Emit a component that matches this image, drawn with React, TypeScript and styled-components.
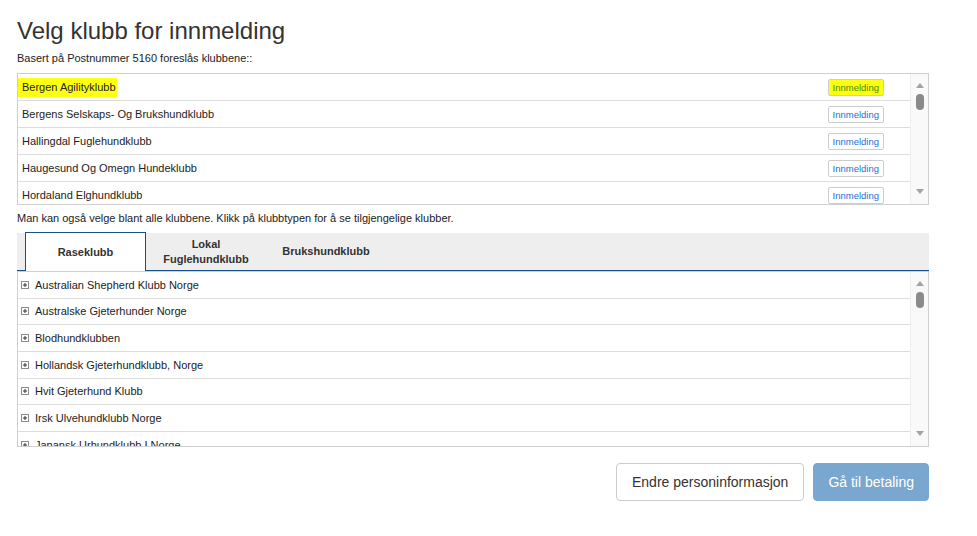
import React from 'react';
import styled, {createGlobalStyle} from 'styled-components';

const GlobalStyle = createGlobalStyle`
    body {
        margin: 0;
        background: #fff;
        font-family: Arial, "Liberation Sans", Helvetica, sans-serif;
        color: #333;
    }
`;

const Page = styled.div`
    width: 912px;
    margin-left: 17px;
    padding-bottom: 35px;
`;

const Heading = styled.h1`
    margin: 16px 0 0;
    font-size: 24px;
    font-weight: normal;
    line-height: 30px;
    color: #333;
`;

const Lead = styled.p<{$top: number; $bottom: number}>`
    margin: ${p => p.$top}px 0 ${p => p.$bottom}px;
    font-size: 11px;
    line-height: 16px;
    color: #222;
`;

const Box = styled.div<{$height: number}>`
    display: flex;
    height: ${p => p.$height}px;
    border: 1px solid #cfcfcf;
    overflow: hidden;
`;

const List = styled.div`
    flex: 1;
    overflow: hidden;
`;

const Row = styled.div<{$h: number}>`
    display: flex;
    align-items: center;
    justify-content: space-between;
    height: ${p => p.$h}px;
    box-sizing: border-box;
    border-bottom: 1px solid #ddd;
    padding: 0 26px 0 0;
    font-size: 11px;
    color: #222;
`;

const ClubRow = styled(Row)`
    padding-left: 3px;
    justify-content: flex-start;
    gap: 6px;
`;

const Name = styled.span<{$marked?: boolean}>`
    padding: 3px 1px 4px 4px;
    background: ${p => (p.$marked ? '#ffff10' : 'transparent')};
`;

const SignUp = styled.button<{$marked?: boolean}>`
    height: 17px;
    padding: 0 4px;
    border: 1px solid #ccc;
    border-radius: 2px;
    background: ${p => (p.$marked ? '#ffff10' : '#fff')};
    color: ${p => (p.$marked ? '#3f8a14' : '#1d6fdc')};
    font-family: Arial, "Liberation Sans", sans-serif;
    font-size: 9.5px;
    line-height: 15px;
    cursor: pointer;
`;

const Scrollbar = styled.div`
    width: 17px;
    flex: none;
    display: flex;
    flex-direction: column;
    align-items: center;
    background: #f9f9f9;
    border-left: 1px solid #f0f0f0;
`;

const Arrow = styled.div<{$down?: boolean}>`
    width: 0;
    height: 0;
    margin: ${p => (p.$down ? 'auto 0 10px' : '9px 0 0')};
    border-left: 4px solid transparent;
    border-right: 4px solid transparent;
    ${p => (p.$down ? 'border-top: 5px solid #a3a3a3;' : 'border-bottom: 5px solid #a3a3a3;')}
`;

const Thumb = styled.div`
    width: 8px;
    height: 16px;
    margin-top: 6px;
    border-radius: 4px;
    background: #8a8a8a;
`;

const TabBar = styled.div`
    display: flex;
    height: 37px;
    padding-left: 8px;
    margin-top: 7px;
    background: #eee;
    border-bottom: 1px solid #154f8c;
`;

const Tab = styled.div<{$active?: boolean}>`
    width: 120px;
    box-sizing: border-box;
    padding: 0 14px;
    display: flex;
    align-items: center;
    justify-content: center;
    text-align: center;
    font-size: 11px;
    font-weight: bold;
    line-height: 15px;
    color: #333;
    cursor: pointer;
    ${p => p.$active && `
        width: 121px;
        margin-top: -1px;
        margin-bottom: -1px;
        background: #fff;
        border: 1px solid #154f8c;
        border-bottom: none;
    `}
`;

const Plus = styled.svg`
    flex: none;
`;

const Actions = styled.div`
    display: flex;
    justify-content: flex-end;
    gap: 9px;
    margin-top: 16px;
`;

const Button = styled.button<{$primary?: boolean}>`
    height: 38px;
    padding: 0 ${p => (p.$primary ? 14 : 15)}px;
    border-radius: 4px;
    border: 1px solid ${p => (p.$primary ? '#7aa7d0' : '#ccc')};
    background: ${p => (p.$primary ? '#7aa7d0' : '#fff')};
    color: ${p => (p.$primary ? '#fff' : '#333')};
    font-family: Arial, "Liberation Sans", sans-serif;
    font-size: 14px;
    cursor: pointer;
`;

const suggested = [
    'Bergen Agilityklubb',
    'Bergens Selskaps- Og Brukshundklubb',
    'Hallingdal Fuglehundklubb',
    'Haugesund Og Omegn Hundeklubb',
    'Hordaland Elghundklubb',
];

const clubs = [
    'Australian Shepherd Klubb Norge',
    'Australske Gjeterhunder Norge',
    'Blodhundklubben',
    'Hollandsk Gjeterhundklubb, Norge',
    'Hvit Gjeterhund Klubb',
    'Irsk Ulvehundklubb Norge',
    'Japansk Urhundklubb I Norge',
];

const tabs = ['Raseklubb', 'Lokal Fuglehundklubb', 'Brukshundklubb'];

function PlusIcon() {
    return (
        <Plus width="8" height="8" viewBox="0 0 8 8">
            <rect x="0.5" y="0.5" width="7" height="7" fill="#fff" stroke="#8c8c8c"/>
            <path d="M2 4h4M4 2v4" stroke="#333" strokeWidth="1"/>
        </Plus>
    );
}

function FakeScroll() {
    return (
        <Scrollbar>
            <Arrow/>
            <Thumb/>
            <Arrow $down/>
        </Scrollbar>
    );
}

export default function App() {
    return (
        <Page>
            <GlobalStyle/>
            <Heading>Velg klubb for innmelding</Heading>
            <Lead $top={4} $bottom={7}>Basert på Postnummer 5160 foreslås klubbene::</Lead>
            <Box $height={130}>
                <List>
                    {suggested.map((name, i) => (
                        <Row key={name} $h={27}>
                            <Name $marked={i === 0}>{name}</Name>
                            <SignUp $marked={i === 0}>Innmelding</SignUp>
                        </Row>
                    ))}
                </List>
                <FakeScroll/>
            </Box>
            <Lead $top={5} $bottom={0}>
                Man kan også velge blant alle klubbene. Klikk på klubbtypen for å se tilgjengelige klubber.
            </Lead>
            <TabBar>
                {tabs.map((t, i) => (
                    <Tab key={t} $active={i === 0}>{t}</Tab>
                ))}
            </TabBar>
            <Box $height={174}>
                <List>
                    {clubs.map(name => (
                        <ClubRow key={name} $h={26.67}>
                            <PlusIcon/>
                            {name}
                        </ClubRow>
                    ))}
                </List>
                <FakeScroll/>
            </Box>
            <Actions>
                <Button>Endre personinformasjon</Button>
                <Button $primary>Gå til betaling</Button>
            </Actions>
        </Page>
    );
}
